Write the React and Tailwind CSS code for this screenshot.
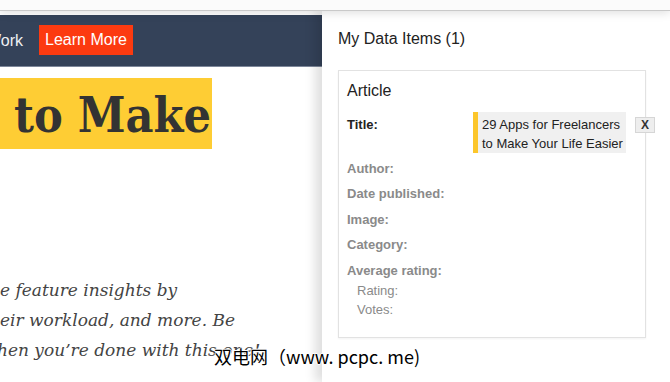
export default function App() {
  const sans = { fontFamily: '"Liberation Sans", Arial, sans-serif' };
  return (
    <div className="relative w-[670px] h-[382px] overflow-hidden bg-white" style={sans}>
      <div className="relative z-20 h-[11px] bg-[#fbfbfb] border-b border-[#c9c9c9] shadow-[0_2px_10px_rgba(0,0,0,0.13)]" />
      <div className="flex h-[371px]">
        {/* left page */}
        <div className="w-[322px] shrink-0 pt-[4px] overflow-hidden">
          <div className="h-[52px] bg-[#344259] border-b border-[#7d879a] flex items-center pl-0">
            <span className="ml-[-14px] text-[16px] text-[#eef0f3] whitespace-nowrap">Work</span>
            <span className="ml-[16px] mt-[-2px] h-[30px] px-[6px] bg-[#fc3a10] text-white text-[16px] leading-[30px] whitespace-nowrap">Learn More</span>
          </div>
          <div className="mt-[11px] w-[212px] h-[71px] bg-[#fecd34] overflow-hidden flex justify-end items-center">
            <span
              className="whitespace-nowrap text-[#333] font-bold text-[48px] leading-[71px] pr-[1px] mt-[4px]"
              style={{ fontFamily: '"DejaVu Serif Condensed", "DejaVu Serif", serif', fontStretch: 'condensed' }}
            >
              s to Make
            </span>
          </div>
          <div
            className="mt-[126px] italic text-[17px] leading-[30px] text-[#444] whitespace-nowrap"
            style={{ fontFamily: '"DejaVu Serif", serif' }}
          >
            <div>e feature insights by</div>
            <div>eir workload, and more. Be</div>
            <div className="ml-[-3px]">hen you’re done with this one!</div>
          </div>
        </div>
        {/* right panel */}
        <div className="relative z-10 flex-1 bg-white shadow-[-7px_0_10px_rgba(0,0,0,0.13)] pl-[16px] pt-[18px]">
          <div className="text-[16px] leading-[20px] text-[#222]">My Data Items (1)</div>
          <div className="mt-[21px] w-[308px] h-[268px] border border-[#e2e2e2] shadow-[0_1px_2px_rgba(0,0,0,0.05)] px-[8px] pt-[10px]">
            <div className="text-[16px] leading-[20px] text-[#222]">Article</div>
            <div className="mt-[11px] flex items-start text-[13px] leading-[19px]">
              <div className="w-[126px] shrink-0 pt-[3px] font-bold text-[#222]">Title:</div>
              <div className="w-[153px] shrink-0 h-[41px] bg-[#f0f0f0] border-l-[5px] border-[#fcc62b] pl-[4px] pt-[3px] text-[#222] whitespace-nowrap">
                <div>29 Apps for Freelancers</div>
                <div>to Make Your Life Easier</div>
              </div>
              <div className="ml-[9px] mt-[5px] shrink-0 w-[20px] h-[16px] bg-[#eeeeee] border border-[#d6d6d6] flex items-center justify-center text-[12px] font-bold text-[#333] leading-none">X</div>
            </div>
            <div className="flex flex-col text-[13px] leading-[19px] text-[#8a8a8a]">
              <div className="mt-[6px] font-bold">Author:</div>
              <div className="mt-[6px] font-bold">Date published:</div>
              <div className="mt-[7px] font-bold">Image:</div>
              <div className="mt-[6px] font-bold">Category:</div>
              <div className="mt-[7px] font-bold">Average rating:</div>
              <div className="mt-[1px] pl-[10px]">Rating:</div>
              <div className="pl-[10px]">Votes:</div>
            </div>
          </div>
        </div>
      </div>
      <div
        className="absolute left-[214px] top-[344px] z-30 text-[18px] leading-[24px] text-black whitespace-nowrap"
        style={{
          fontFamily: '"Noto Sans CJK SC", sans-serif',
          textShadow: '1px 0 0 #fff, -1px 0 0 #fff, 0 1px 0 #fff, 0 -1px 0 #fff',
        }}
      >
        双电网（www. pcpc. me)
      </div>
    </div>
  );
}
